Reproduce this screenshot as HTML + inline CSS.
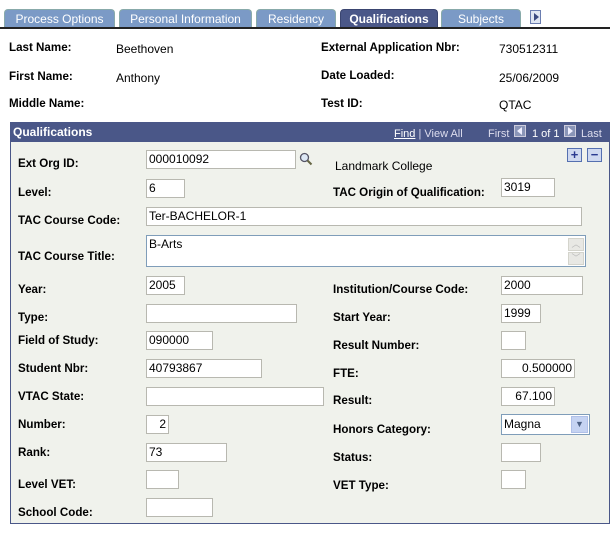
<!DOCTYPE html>
<html><head><style>
body{margin:0;width:616px;height:535px;background:#fff;font-family:"Liberation Sans",Arial,sans-serif;font-size:12px;color:#000;position:relative;overflow:hidden}
.a{position:absolute;white-space:nowrap}
.b{font-weight:bold}
.tab{position:absolute;top:9px;height:18px;background:#7b9ac6;color:#fff;font-size:12px;line-height:18px;text-align:center;border-radius:4px 4px 0 0;border:1px solid #8aa;border-bottom:none;box-sizing:border-box}
.in{position:absolute;background:#fff;border:1px solid #b8b8b0;box-sizing:border-box;height:19px;font-size:12px;line-height:17px;padding-left:2px}
.lb{position:absolute;font-weight:bold;white-space:nowrap;line-height:14px;font-size:11.6px}
.nav{position:absolute;top:125px;width:12px;height:12px;border:1px solid #ccd;background:#8a95b8;box-sizing:border-box}
</style></head><body>
<div class="tab" style="left:4px;width:111px">Process Options</div>
<div class="tab" style="left:119px;width:133px">Personal Information</div>
<div class="tab" style="left:256px;width:80px">Residency</div>
<div class="tab" style="left:340px;width:98px;background:#4a5788;font-weight:bold;border-color:#3a4570">Qualifications</div>
<div class="tab" style="left:441px;width:80px">Subjects</div>
<div class="a" style="left:530px;top:10px;width:11px;height:14px;border:1px solid #6a7db0;background:#dfe6f2;box-sizing:border-box"><svg width="9" height="12" style="position:absolute;left:1px;top:0"><path d="M2 2 L7 6 L2 10Z" fill="#3a4a80"/></svg></div>
<div class="a" style="left:0;top:27px;width:610px;height:2px;background:#222"></div>

<div class="lb" style="left:9px;top:41px">Last Name:</div><div class="a" style="left:116px;top:42px">Beethoven</div>
<div class="lb" style="left:9px;top:70px">First Name:</div><div class="a" style="left:116px;top:71px">Anthony</div>
<div class="lb" style="left:9px;top:97px">Middle Name:</div>
<div class="lb" style="left:321px;top:41px">External Application Nbr:</div><div class="a" style="left:499px;top:42px">730512311</div>
<div class="lb" style="left:321px;top:69px">Date Loaded:</div><div class="a" style="left:499px;top:71px">25/06/2009</div>
<div class="lb" style="left:321px;top:97px">Test ID:</div><div class="a" style="left:499px;top:98px">QTAC</div>

<div class="a" style="left:10px;top:122px;width:600px;height:402px;background:#f0f2ec;border:1px solid #4a5788;box-sizing:border-box"></div>
<div class="a" style="left:10px;top:122px;width:600px;height:20px;background:#4a5788"></div>
<div class="a b" style="left:13px;top:125px;color:#fff">Qualifications</div>
<div class="a" style="left:394px;top:128px;color:#fff;font-size:11px"><u>Find</u> <span style="color:#dde">| View All</span></div>
<div class="a" style="left:488px;top:128px;color:#dde;font-size:11px">First</div>
<div class="nav" style="left:514px"><svg width="10" height="10" style="position:absolute;left:0;top:0"><path d="M7 1 L2 5 L7 9Z" fill="#eef"/></svg></div>
<div class="a" style="left:532px;top:128px;color:#fff;font-size:11px">1 of 1</div>
<div class="nav" style="left:564px"><svg width="10" height="10" style="position:absolute;left:0;top:0"><path d="M3 1 L8 5 L3 9Z" fill="#eef"/></svg></div>
<div class="a" style="left:581px;top:128px;color:#dde;font-size:11px">Last</div>
<div class="a" style="left:567px;top:148px;width:15px;height:14px;background:#cfd9f0;border:1px solid #5570b0;box-sizing:border-box;color:#2a3a90;font-weight:bold;text-align:center;line-height:12px;font-size:13px">+</div>
<div class="a" style="left:587px;top:148px;width:15px;height:14px;background:#cfd9f0;border:1px solid #5570b0;box-sizing:border-box;color:#2a3a90;font-weight:bold;text-align:center;line-height:12px;font-size:13px">−</div>

<div class="lb" style="left:18px;top:157px">Ext Org ID:</div><div class="in" style="left:146px;top:150px;width:150px">000010092</div>
<svg class="a" style="left:299px;top:152px" width="14" height="14"><circle cx="5.5" cy="5.5" r="4" fill="#dde8f5" stroke="#556" stroke-width="1.3"/><path d="M8.5 8.5 L12.5 12.5" stroke="#664" stroke-width="2"/></svg>
<div class="a" style="left:335px;top:159px">Landmark College</div>
<div class="lb" style="left:18px;top:186px">Level:</div><div class="in" style="left:146px;top:179px;width:39px">6</div>
<div class="lb" style="left:333px;top:186px">TAC Origin of Qualification:</div><div class="in" style="left:501px;top:178px;width:54px">3019</div>
<div class="lb" style="left:18px;top:214px">TAC Course Code:</div><div class="in" style="left:146px;top:207px;width:436px">Ter-BACHELOR-1</div>
<div class="lb" style="left:18px;top:250px">TAC Course Title:</div>
<div class="in" style="left:146px;top:235px;width:440px;height:32px;border-color:#7f9db9;line-height:16px">B-Arts</div>
<div class="a" style="left:568px;top:238px;width:16px;height:13px;background:#e8e8e4;border:1px solid #d4d4cc;box-sizing:border-box;color:#bbb;font-size:9px;text-align:center;line-height:11px">︿</div>
<div class="a" style="left:568px;top:252px;width:16px;height:13px;background:#e8e8e4;border:1px solid #d4d4cc;box-sizing:border-box;color:#bbb;font-size:9px;text-align:center;line-height:11px">﹀</div>
<div class="lb" style="left:18px;top:283px">Year:</div><div class="in" style="left:146px;top:276px;width:39px">2005</div>
<div class="lb" style="left:333px;top:283px">Institution/Course Code:</div><div class="in" style="left:501px;top:276px;width:82px">2000</div>
<div class="lb" style="left:18px;top:311px">Type:</div><div class="in" style="left:146px;top:304px;width:151px"></div>
<div class="lb" style="left:333px;top:311px">Start Year:</div><div class="in" style="left:501px;top:304px;width:40px">1999</div>
<div class="lb" style="left:18px;top:334px">Field of Study:</div><div class="in" style="left:146px;top:331px;width:67px">090000</div>
<div class="lb" style="left:333px;top:339px">Result Number:</div><div class="in" style="left:501px;top:331px;width:25px"></div>
<div class="lb" style="left:18px;top:362px">Student Nbr:</div><div class="in" style="left:146px;top:359px;width:116px">40793867</div>
<div class="lb" style="left:333px;top:367px">FTE:</div><div class="in" style="left:501px;top:359px;width:74px;text-align:right;padding-right:2px">0.500000</div>
<div class="lb" style="left:18px;top:390px">VTAC State:</div><div class="in" style="left:146px;top:387px;width:178px"></div>
<div class="lb" style="left:333px;top:394px">Result:</div><div class="in" style="left:501px;top:387px;width:54px;text-align:right;padding-right:2px">67.100</div>
<div class="lb" style="left:18px;top:418px">Number:</div><div class="in" style="left:146px;top:415px;width:23px;text-align:right;padding-right:2px">2</div>
<div class="lb" style="left:333px;top:423px">Honors Category:</div>
<div class="in" style="left:501px;top:414px;width:89px;height:21px;border-color:#7f9db9;line-height:19px">Magna</div>
<div class="a" style="left:571px;top:416px;width:17px;height:17px;background:#c5d3f2;box-sizing:border-box;border:1px solid #b0c0e8;color:#4d6185;font-size:9px;text-align:center;line-height:15px">▼</div>
<div class="lb" style="left:18px;top:446px">Rank:</div><div class="in" style="left:146px;top:443px;width:81px">73</div>
<div class="lb" style="left:333px;top:451px">Status:</div><div class="in" style="left:501px;top:443px;width:40px"></div>
<div class="lb" style="left:18px;top:478px">Level VET:</div><div class="in" style="left:146px;top:470px;width:33px"></div>
<div class="lb" style="left:333px;top:479px">VET Type:</div><div class="in" style="left:501px;top:470px;width:25px"></div>
<div class="lb" style="left:18px;top:506px">School Code:</div><div class="in" style="left:146px;top:498px;width:67px"></div>
</body></html>
